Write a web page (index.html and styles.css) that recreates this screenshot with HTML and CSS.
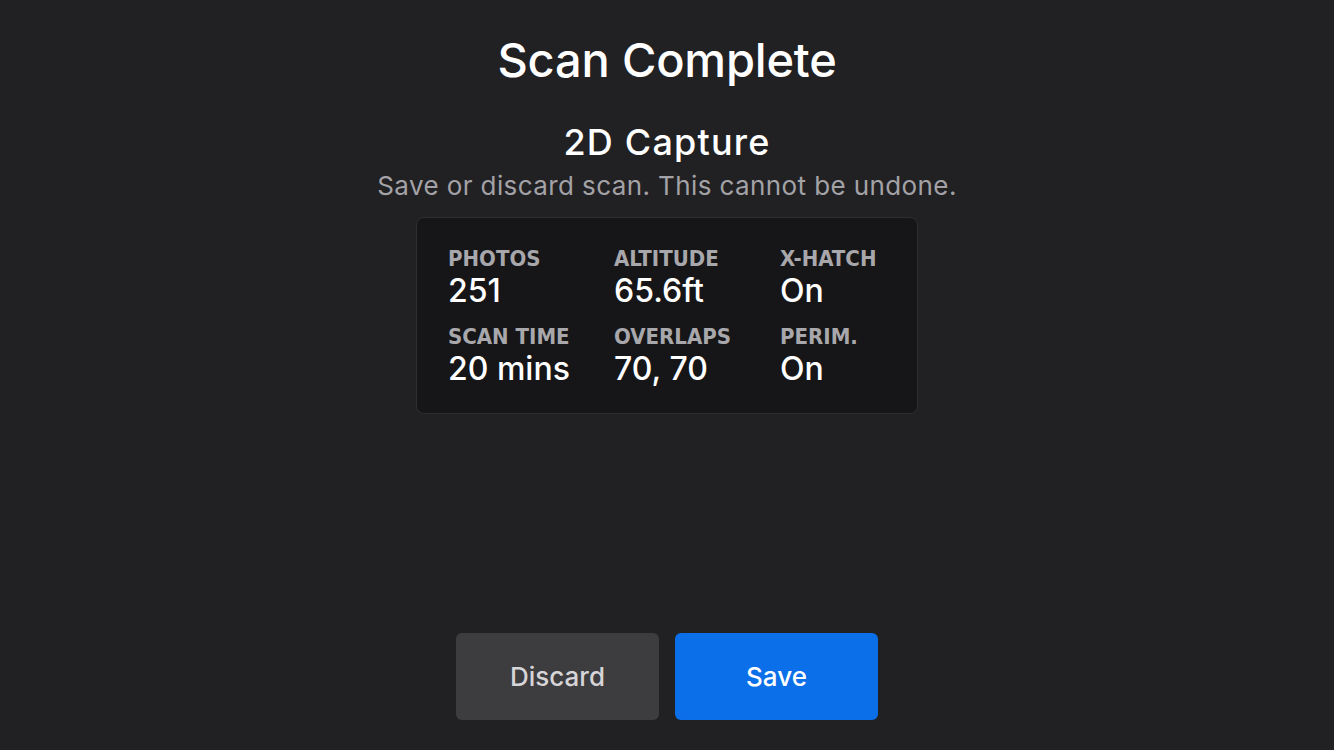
FILE: index.html
```html
<!DOCTYPE html>
<html>
<head>
<meta charset="utf-8">
<link rel="stylesheet" href="styles.css">
</head>
<body>
<main class="screen">
  <h1 class="title">Scan Complete</h1>
  <h2 class="subtitle">2D Capture</h2>
  <p class="note">Save or discard scan. This cannot be undone.</p>
  <section class="card">
    <div class="stat"><div class="label">PHOTOS</div><div class="value">251</div></div>
    <div class="stat"><div class="label">ALTITUDE</div><div class="value">65.6ft</div></div>
    <div class="stat"><div class="label">X-HATCH</div><div class="value">On</div></div>
    <div class="stat"><div class="label">SCAN TIME</div><div class="value">20 mins</div></div>
    <div class="stat"><div class="label">OVERLAPS</div><div class="value">70, 70</div></div>
    <div class="stat"><div class="label">PERIM.</div><div class="value">On</div></div>
  </section>
  <div class="spacer"></div>
  <div class="actions">
    <button class="btn btn-discard">Discard</button>
    <button class="btn btn-save">Save</button>
  </div>
</main>
</body>
</html>
```
FILE: styles.css
```css
html, body {
  margin: 0;
  padding: 0;
  height: 100%;
  background: #212023;
}
.screen {
  height: 750px;
  box-sizing: border-box;
  display: flex;
  flex-direction: column;
  align-items: center;
  padding-top: 30px;
  padding-bottom: 30px;
  font-family: "Inter", "Noto Sans", sans-serif;
  color: #ffffff;
}
.title {
  margin: 0;
  font-size: 47px;
  font-weight: 500;
  line-height: 60px;
  letter-spacing: -0.2px;
}
.subtitle {
  margin: 30px 0 0;
  font-size: 36px;
  font-weight: 500;
  line-height: 44px;
  letter-spacing: 1.2px;
}
.note {
  margin: 6px 0 0;
  font-size: 26px;
  font-weight: 400;
  line-height: 32px;
  letter-spacing: 0.4px;
  color: #a3a2a6;
}
.card {
  margin-top: 15px;
  width: 502px;
  box-sizing: border-box;
  background: #161618;
  border: 1px solid #2e2d31;
  border-radius: 8px;
  padding: 29px 31px 24px;
  display: grid;
  grid-template-columns: 166px 166px 1fr;
  row-gap: 14px;
}
.label {
  font-family: "DejaVu Sans Condensed", "DejaVu Sans", sans-serif;
  font-weight: 700;
  font-size: 22px;
  line-height: 24px;
  color: #a8a7ab;
  letter-spacing: 0;
}
.value {
  font-size: 32px;
  font-weight: 500;
  line-height: 40px;
  color: #ffffff;
}
.spacer {
  flex: 1;
}
.actions {
  display: flex;
  gap: 16px;
}
.btn {
  width: 203px;
  height: 87px;
  border: none;
  border-radius: 6px;
  font-family: "Inter", "Noto Sans", sans-serif;
  font-size: 26px;
  font-weight: 500;
}
.btn-discard {
  background: #3d3c3f;
  color: #d6d5d8;
}
.btn-save {
  background: #0a6fe8;
  color: #ffffff;
}
```
